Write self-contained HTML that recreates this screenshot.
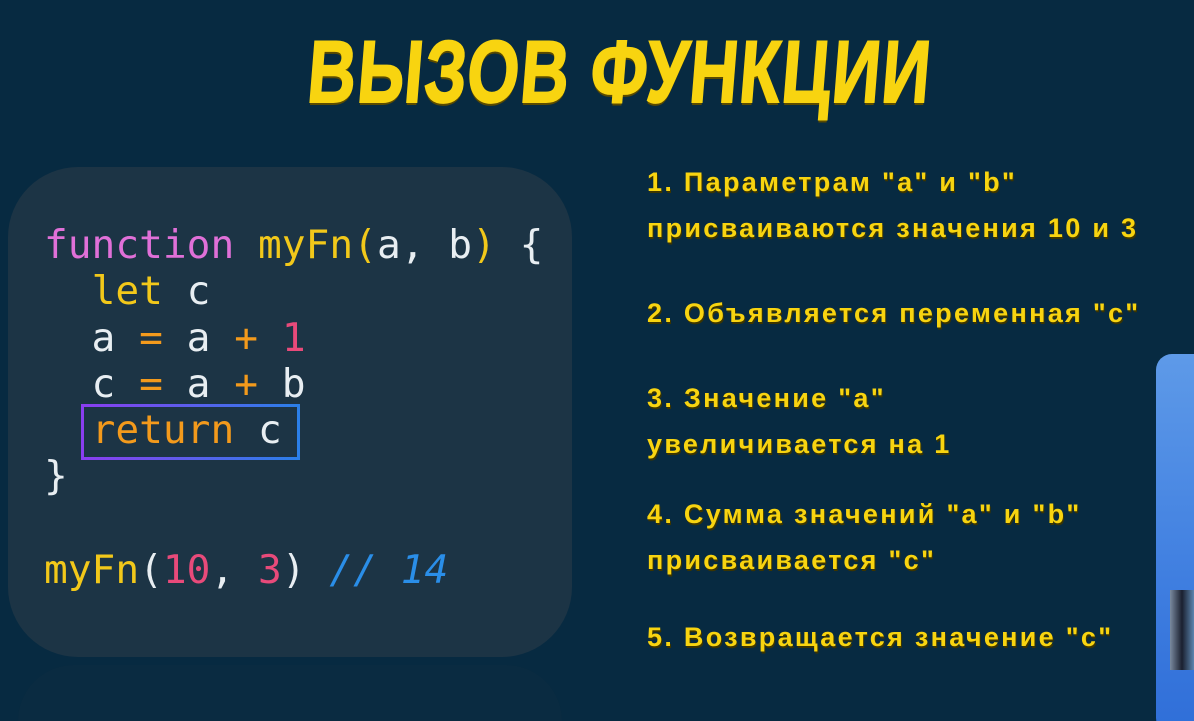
<!DOCTYPE html>
<html><head><meta charset="utf-8"><style>
html,body{margin:0;padding:0;width:1194px;height:721px;overflow:hidden}
body{background:#072a41;position:relative;font-family:"Liberation Sans",sans-serif}
.title{position:absolute;left:620px;top:22px;transform:translateX(-50%) scaleX(0.76) skewX(-6deg);transform-origin:center;white-space:nowrap;font-weight:bold;font-size:88px;line-height:100px;color:#f8d410;text-shadow:0 3px 0 #5a4a00;letter-spacing:2px;-webkit-text-stroke:2px #f8d410}
.box{position:absolute;left:8px;top:167px;width:564px;height:490px;border-radius:70px;background:#1c3445}
.refl{position:absolute;left:18px;top:665px;width:544px;height:56px;border-radius:60px 60px 0 0;background:#0a2b41}
.code{position:absolute;left:44px;font-family:"DejaVu Sans Mono","Liberation Mono",monospace;font-size:39.5px;white-space:pre;line-height:46px;color:#e8eef2}
.p{color:#e070d8}.y{color:#f2c81a}.o{color:#f39a1c}.r{color:#e84a7a}.b{color:#2a8ee8;font-style:italic}
.ret{position:absolute;left:81px;top:404px;width:213px;height:50px;border:3px solid;border-radius:4px;border-image:linear-gradient(90deg,#8a3ef0,#2b7fe8) 1}
.t{position:absolute;left:647px;font-weight:bold;font-size:27px;color:#f8d410;letter-spacing:2.3px;white-space:nowrap;text-shadow:1px 2px 0 #3c3500}
.vid{position:absolute;left:1156px;top:354px;width:60px;height:380px;border-radius:16px;background:linear-gradient(180deg,#5e9ae8,#3f7ee0 60%,#2f6ed8)}
.cup{position:absolute;left:1170px;top:590px;width:24px;height:80px;background:linear-gradient(90deg,#7a8aa0,#1a2030,#5c86b0)}
</style></head><body>
<div class="title">ВЫЗОВ ФУНКЦИИ</div>
<div class="box"></div>
<div class="refl"></div>
<div class="code" style="top:222px"><span class="p">function</span> <span class="y">myFn(</span>a, b<span class="y">)</span> {</div>
<div class="code" style="top:268px">  <span class="y">let</span> c</div>
<div class="code" style="top:315px">  a <span class="o">=</span> a <span class="o">+</span> <span class="r">1</span></div>
<div class="code" style="top:361px">  c <span class="o">=</span> a <span class="o">+</span> b</div>
<div class="code" style="top:407px">  <span class="o">return</span> c</div>
<div class="code" style="top:453px">}</div>
<div class="code" style="top:547px"><span class="y">myFn</span>(<span class="r">10</span>, <span class="r">3</span>) <span class="b">// 14</span></div>
<div class="ret"></div>
<div class="t" style="top:167px">1. Параметрам "a" и "b"</div>
<div class="t" style="top:213px">присваиваются значения 10 и 3</div>
<div class="t" style="top:298px">2. Объявляется переменная "c"</div>
<div class="t" style="top:383px">3. Значение "a"</div>
<div class="t" style="top:429px">увеличивается на 1</div>
<div class="t" style="top:499px">4. Сумма значений "a" и "b"</div>
<div class="t" style="top:545px">присваивается "c"</div>
<div class="t" style="top:622px">5. Возвращается значение "c"</div>
<div class="vid"></div>
<div class="cup"></div>
</body></html>
